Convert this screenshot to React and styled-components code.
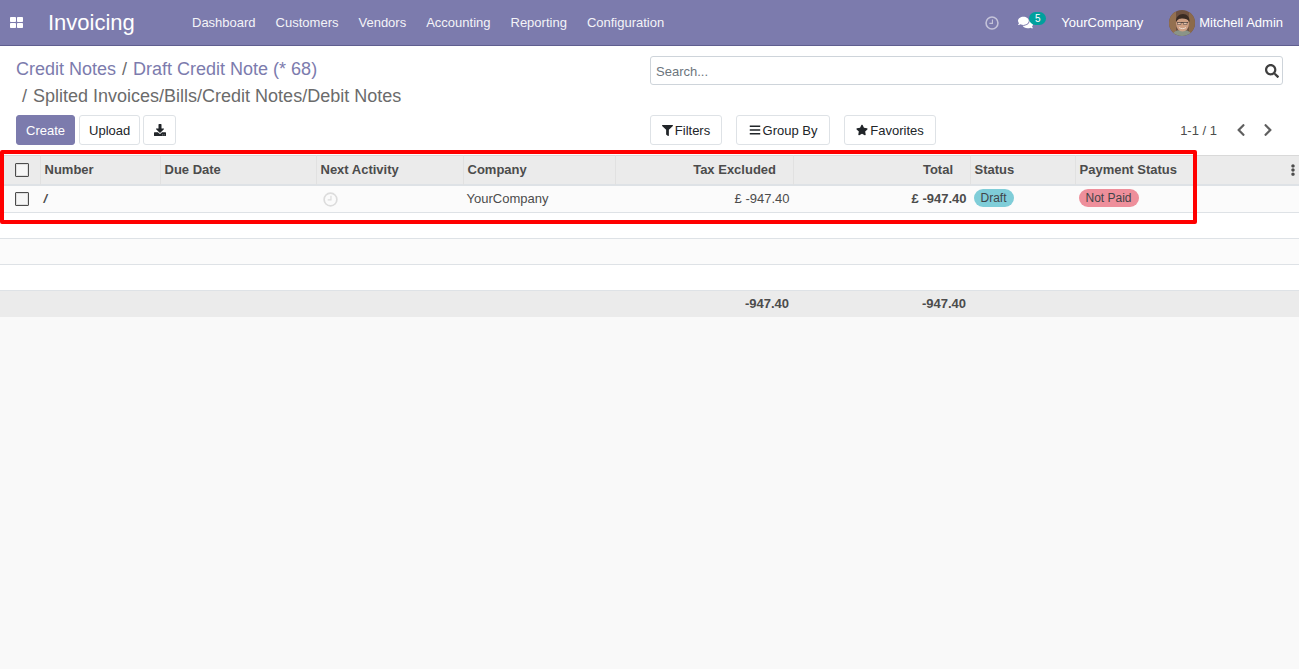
import styled, { createGlobalStyle } from 'styled-components'
import { FaFilter, FaBars, FaStar, FaSearch, FaChevronLeft, FaChevronRight, FaDownload, FaComments, FaEllipsisV } from 'react-icons/fa'

const GlobalStyle = createGlobalStyle`
  html, body {
    margin: 0;
    height: 100%;
    background: #f9f9f9;
    font-family: "Liberation Sans", Arial, sans-serif;
    font-size: 13px;
    color: #4c4c4c;
  }
`
const Page = styled.div`
  position: relative;
  min-height: 669px;
`
const Navbar = styled.nav`
  display: flex;
  align-items: center;
  height: 45px;
  background: #7c7bad;
  border-bottom: 1px solid #5f5e8f;
  color: #fff;
`
const AppsButton = styled.span`
  display: flex;
  width: 48px;
  padding-left: 10px;
  box-sizing: border-box;
`
const Brand = styled.span`
  width: 144px;
  font-size: 22px;
`
const MenuItem = styled.span`
  margin-right: 20px;
  font-size: 13px;
  color: #f4f4f8;
`
const NavRight = styled.div`
  display: flex;
  align-items: center;
  margin-left: auto;
  padding-right: 16px;
`
const ClockWrap = styled.span`
  display: flex;
  margin-right: 19px;
`
const Chat = styled.span`
  position: relative;
  display: flex;
  margin-right: 28px;
`
const ChatBadge = styled.span`
  position: absolute;
  left: 11px;
  top: -3px;
  width: 17px;
  height: 13px;
  border-radius: 7px;
  background: #00a09d;
  color: #fff;
  font-size: 10px;
  line-height: 13px;
  text-align: center;
`
const Company = styled.span`
  margin-right: 26px;
`
const User = styled.span`
  display: flex;
  align-items: center;
  gap: 4px;
`
const ControlPanel = styled.div`
  display: flex;
  height: 99px;
  padding: 10px 16px 0;
  background: #fff;
`
const LeftCol = styled.div`
  display: flex;
  flex-direction: column;
  width: 634px;
`
const RightCol = styled.div`
  display: flex;
  flex-direction: column;
  flex: 1;
`
const Crumbs = styled.div`
  height: 59px;
  font-size: 18px;
  line-height: 27px;
  color: #6b6b6b;
`
const CrumbLink = styled.span`
  color: #7c7bad;
`
const Sep = styled.span`
  margin: 0 6px;
  color: #6b6b6b;
`
const Buttons = styled.div`
  display: flex;
  gap: 4px;
`
const Button = styled.button`
  display: flex;
  align-items: center;
  justify-content: center;
  height: 30px;
  padding: 0 9px;
  box-sizing: border-box;
  border: 1px solid ${p => (p.$primary ? '#7c7bad' : '#dee2e6')};
  border-radius: 3px;
  background: ${p => (p.$primary ? '#7c7bad' : '#fff')};
  color: ${p => (p.$primary ? '#fff' : '#212529')};
  font: 13px "Liberation Sans", Arial, sans-serif;
`
const IconButton = styled(Button)`
  width: 33px;
  margin-left: -1px;
  padding: 0;
`
const SearchBox = styled.div`
  display: flex;
  align-items: center;
  justify-content: space-between;
  height: 29px;
  padding: 0 3px 0 5px;
  box-sizing: border-box;
  border: 1px solid #ced4da;
  border-radius: 3px;
  color: #6c757d;
`
const SearchLabel = styled.span`
  margin-top: 2px;
`
const ToolRow = styled.div`
  display: flex;
  align-items: center;
  margin-top: 30px;
`
const FilterButton = styled(Button)`
  gap: 2px;
  width: ${p => p.$w}px;
  margin-right: 14px;
  padding: 0;
`
const Pager = styled.div`
  display: flex;
  align-items: center;
  margin-left: auto;
  padding-right: 8px;
  color: #4c4c4c;
`
const PagerArrow = styled.span`
  display: flex;
  margin-left: ${p => p.$gap}px;
  color: #5f5f5f;
`
const Table = styled.table`
  width: 100%;
  table-layout: fixed;
  border-collapse: separate;
  border-spacing: 0;
  background: #fff;
`
const Th = styled.th`
  height: 31px;
  padding: 0 4px 2px 3.5px;
  box-sizing: border-box;
  background: #ebebeb;
  border-top: 1px solid #d9d9d9;
  border-bottom: 2px solid #dee2e6;
  border-left: ${p => (p.$first ? '0' : '1px solid #e1e1e1')};
  text-align: ${p => (p.$right ? 'right' : 'left')};
  padding-right: ${p => (p.$right ? p.$right : 4)}px;
  font-size: 13px;
  font-weight: 700;
  color: #4c4c4c;
`
const Td = styled.td`
  height: ${p => p.$h || 26}px;
  padding: 0 ${p => (p.$right ? 3.5 : 4)}px 2px 3.5px;
  box-sizing: border-box;
  border-bottom: 1px solid #dee2e6;
  text-align: ${p => (p.$right ? 'right' : 'left')};
  font-weight: ${p => (p.$bold ? 700 : 400)};
  font-style: ${p => (p.$italic ? 'italic' : 'normal')};
`
const Row = styled.tr`
  background: ${p => (p.$striped ? '#fbfbfb' : '#fff')};
`
const FootTd = styled.td`
  height: 26px;
  padding: 0 4px 2px 3px;
  box-sizing: border-box;
  background: #ebebeb;
  text-align: right;
  font-weight: 700;
`
const Check = styled.span`
  display: block;
  width: 14px;
  height: 14px;
  margin: 2px 0 0 11.5px;
  box-sizing: border-box;
  border: 1px solid #4c4c4c;
  border-radius: 1px;
  background: #f6f6f6;
  box-shadow: inset 0 0 0 1px #dedede;
`
const ActivityIcon = styled.span`
  display: block;
  height: 15px;
  margin: 2px 0 0 3.5px;
`
const Badge = styled.span`
  display: inline-block;
  height: 18px;
  padding: 0 7px;
  border-radius: 9px;
  background: ${p => p.$bg};
  color: #3f4448;
  font-size: 12px;
  line-height: 18px;
`
const MoreDots = styled.span`
  display: flex;
  float: right;
  margin: 2px -4px 0 0;
  color: #4c4c4c;
`
const Highlight = styled.div`
  position: absolute;
  left: 0;
  top: 150px;
  width: 1197px;
  height: 74px;
  box-sizing: border-box;
  border: 4px solid #ff0000;
  border-radius: 2px;
  pointer-events: none;
`

function ClockIcon({ size, color }) {
  return (
    <svg width={size} height={size} viewBox="0 0 16 16" fill="none" stroke={color} strokeWidth="1.8">
      <circle cx="8" cy="8" r="6.8" />
      <path d="M8.500 4v4.500H5" strokeWidth="1.300" />
    </svg>
  )
}

function AppsIcon() {
  return (
    <svg width="13" height="11" viewBox="0 0 13 11" fill="#fff">
      <rect x="0" y="0" width="6" height="5" rx="0.8" />
      <rect x="7" y="0" width="6" height="5" rx="0.8" />
      <rect x="0" y="6" width="6" height="5" rx="0.8" />
      <rect x="7" y="6" width="6" height="5" rx="0.8" />
    </svg>
  )
}

function Avatar() {
  return (
    <svg width="26" height="26" viewBox="0 0 26 26">
      <defs>
        <clipPath id="avatarClip"><circle cx="13" cy="13" r="13" /></clipPath>
      </defs>
      <g clipPath="url(#avatarClip)">
        <rect width="26" height="26" fill="#6e5140" />
        <rect x="0" y="0" width="7" height="26" fill="#94704f" />
        <rect x="20" y="0" width="6" height="26" fill="#8c6a4a" />
        <path d="M3 26c1-5 5-6 10-6s9 1 10 6z" fill="#8a9488" />
        <ellipse cx="13.500" cy="13.500" rx="6.500" ry="8" fill="#cfa084" />
        <path d="M7 12c-.5-5 3-8 7-8s7 3 6.500 8c-1.500-3-4-3.500-7-3.500S9 9 7 12z" fill="#3a2b23" />
        <path d="M8 12.500h11" fill="none" stroke="#3d3230" strokeWidth="0.8" />
        <path d="M8.500 12.500h3.500v2h-3.500zM14.500 12.500h3.500v2h-3.500z" fill="#e2c3ae" stroke="#4a3d38" strokeWidth="0.5" />
        <path d="M10 17.500c2 1.500 5 1.500 7 0" fill="none" stroke="#efe3da" strokeWidth="0.9" />
      </g>
    </svg>
  )
}

const columns = [
  { label: '', width: 40 },
  { label: 'Number', width: 120 },
  { label: 'Due Date', width: 156 },
  { label: 'Next Activity', width: 147 },
  { label: 'Company', width: 152 },
  { label: 'Tax Excluded', width: 178, right: 17 },
  { label: 'Total', width: 177, right: 17 },
  { label: 'Status', width: 105 },
  { label: 'Payment Status', width: 224 },
]

function App() {
  return (
    <Page>
      <GlobalStyle />
      <Navbar>
        <AppsButton><AppsIcon /></AppsButton>
        <Brand>Invoicing</Brand>
        {['Dashboard', 'Customers', 'Vendors', 'Accounting', 'Reporting', 'Configuration'].map(m => (
          <MenuItem key={m}>{m}</MenuItem>
        ))}
        <NavRight>
          <ClockWrap><ClockIcon size={14} color="#c4c3d9" /></ClockWrap>
          <Chat>
            <FaComments size={15} />
            <ChatBadge>5</ChatBadge>
          </Chat>
          <Company>YourCompany</Company>
          <User><Avatar />Mitchell Admin</User>
        </NavRight>
      </Navbar>

      <ControlPanel>
        <LeftCol>
          <Crumbs>
            <div>
              <CrumbLink>Credit Notes</CrumbLink><Sep>/</Sep><CrumbLink>Draft Credit Note (* 68)</CrumbLink>
            </div>
            <div><Sep>/</Sep>Splited Invoices/Bills/Credit Notes/Debit Notes</div>
          </Crumbs>
          <Buttons>
            <Button $primary>Create</Button>
            <Button>Upload</Button>
            <IconButton><FaDownload size={12} /></IconButton>
          </Buttons>
        </LeftCol>
        <RightCol>
          <SearchBox>
            <SearchLabel>Search...</SearchLabel>
            <FaSearch size={14} color="#3f3f3f" />
          </SearchBox>
          <ToolRow>
            <FilterButton $w={72}><FaFilter size={11} />Filters</FilterButton>
            <FilterButton $w={94}><FaBars size={12} />Group By</FilterButton>
            <FilterButton $w={92}><FaStar size={12} />Favorites</FilterButton>
            <Pager>
              1-1 / 1
              <PagerArrow $gap={17}><FaChevronLeft size={14} /></PagerArrow>
              <PagerArrow $gap={13}><FaChevronRight size={14} /></PagerArrow>
            </Pager>
          </ToolRow>
        </RightCol>
      </ControlPanel>

      <Table>
        <colgroup>
          {columns.map((c, i) => <col key={i} style={{ width: c.width }} />)}
        </colgroup>
        <thead>
          <tr>
            {columns.map((c, i) => (
              <Th key={i} $first={i === 0} $right={c.right}>
                {i === 0 && <Check />}
                {c.label}
                {i === 8 && <MoreDots><FaEllipsisV size={12} /></MoreDots>}
              </Th>
            ))}
          </tr>
        </thead>
        <tbody>
          <Row $striped>
            <Td $h={27}><Check /></Td>
            <Td $bold $italic>/</Td>
            <Td />
            <Td><ActivityIcon><ClockIcon size={15} color="#dcdcdc" /></ActivityIcon></Td>
            <Td>YourCompany</Td>
            <Td $right>£ -947.40</Td>
            <Td $right $bold>£ -947.40</Td>
            <Td><Badge $bg="#7fcdd8">Draft</Badge></Td>
            <Td><Badge $bg="#ee8f9b">Not Paid</Badge></Td>
          </Row>
          <Row><Td colSpan={9} /></Row>
          <Row $striped><Td colSpan={9} /></Row>
          <Row><Td colSpan={9} /></Row>
        </tbody>
        <tfoot>
          <tr>
            <FootTd colSpan={5} />
            <FootTd>-947.40</FootTd>
            <FootTd>-947.40</FootTd>
            <FootTd colSpan={2} />
          </tr>
        </tfoot>
      </Table>
      <Highlight />
    </Page>
  )
}

export default App
